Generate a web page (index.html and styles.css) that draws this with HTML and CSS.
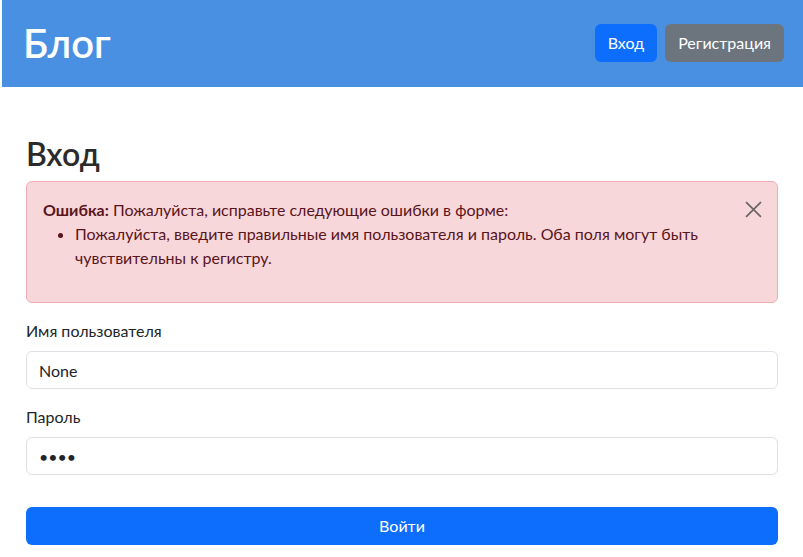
FILE: index.html
```html
<!DOCTYPE html>
<html lang="ru">
<head>
<meta charset="utf-8">
<title>Вход</title>
<link rel="stylesheet" href="styles.css">
</head>
<body>
<header class="topbar">
  <div class="brand">Блог</div>
  <nav class="nav">
    <a class="btn btn-primary" href="#">Вход</a>
    <a class="btn btn-secondary" href="#">Регистрация</a>
  </nav>
</header>
<main class="container">
  <h2 class="title">Вход</h2>
  <div class="alert">
    <strong>Ошибка:</strong> Пожалуйста, исправьте следующие ошибки в форме:
    <ul class="errors">
      <li>Пожалуйста, введите правильные имя пользователя и пароль. Оба поля могут быть чувствительны к регистру.</li>
    </ul>
    <button class="close" type="button" aria-label="Close">
      <svg width="17" height="17" viewBox="0 0 16 16"><path d="M1 1L15 15M15 1L1 15" stroke="#6b6465" stroke-width="1.6" fill="none"/></svg>
    </button>
  </div>
  <form class="form">
    <div class="field">
      <label class="label">Имя пользователя</label>
      <input class="input" type="text" value="None">
    </div>
    <div class="field">
      <label class="label">Пароль</label>
      <input class="input" type="password" value="abcd">
    </div>
    <button class="submit" type="button">Войти</button>
  </form>
</main>
</body>
</html>
```
FILE: styles.css
```css
* { box-sizing: border-box; }
html, body { margin: 0; padding: 0; background: #fff; }
body {
  font-family: "Lato", "Open Sans", sans-serif;
  font-size: 16px;
  line-height: 24px;
  color: #212529;
}
.topbar {
  margin-left: 2px;
  height: 87px;
  background: #4a90e2;
  display: flex;
  align-items: center;
  justify-content: space-between;
  padding: 0 19px 2px 21px;
}
.brand {
  color: #fff;
  font-size: 40px;
  font-weight: 600;
  line-height: 48px;
}
.nav { display: flex; gap: 8px; }
.btn {
  display: inline-block;
  height: 38px;
  line-height: 36px;
  padding: 0 12px;
  border-radius: 6px;
  color: #fff;
  text-decoration: none;
  font-size: 16px;
  border: 1px solid transparent;
}
.btn-primary { background: #0d6efd; }
.btn-secondary { background: #6c757d; }
.container { padding: 48px 25px 0 26px; }
.title {
  margin: 0 0 8px;
  font-size: 32px;
  line-height: 38px;
  font-weight: 600;
  color: #2b2b2b;
}
.alert {
  position: relative;
  background: #f8d7da;
  border: 1px solid #f1aeb5;
  border-radius: 6px;
  color: #58151c;
  padding: 16px 48px 16px 16px;
  margin-bottom: 16px;
}
.alert strong { font-weight: 700; }
.errors { margin: 0 0 16px; padding-left: 32px; }
.close {
  position: absolute;
  top: 19px;
  right: 15px;
  width: 17px;
  height: 17px;
  padding: 0;
  border: 0;
  background: transparent;
  display: flex;
}
.field { margin-bottom: 16px; }
.label { display: block; margin-bottom: 8px; }
.input {
  display: block;
  width: 100%;
  height: 38px;
  padding: 6px 12px;
  font: inherit;
  color: #212529;
  background: #fff;
  border: 1px solid #dee2e6;
  border-radius: 6px;
}
.form { margin: 0; }
.submit {
  display: block;
  width: 100%;
  height: 38px;
  margin-top: 32px;
  border: 0;
  border-radius: 6px;
  background: #0d6efd;
  color: #fff;
  font: inherit;
}
```
